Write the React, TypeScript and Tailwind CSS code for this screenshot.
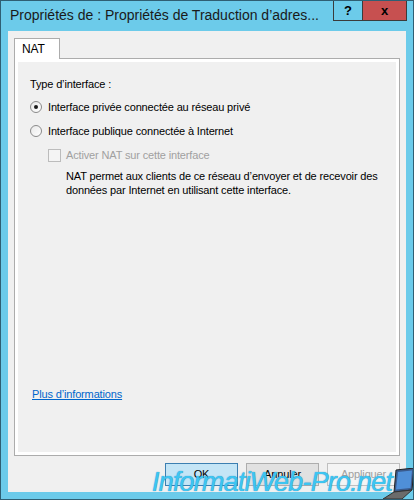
export default function App() {
  return (
    <div className="relative w-[414px] h-[500px] overflow-hidden bg-[#6ccbea] border border-[#2f5f73] flex flex-col font-['Liberation_Sans',Arial,sans-serif] text-[11px] tracking-[-0.15px] text-black">
      {/* Title bar */}
      <div className="flex h-[30px] shrink-0">
        <div className="flex-1 pl-[9px] pt-[4px] text-[14px] tracking-normal leading-[20px] text-[#1a1a1a] whitespace-nowrap overflow-hidden">
          Propriétés de : Propriétés de Traduction d’adres...
        </div>
        <div className="flex h-[20px] mr-[6px] border-b border-[#3b3b3b]">
          <div className="w-[29px] border-l border-[#3b3b3b] flex items-center justify-center font-bold text-[13px]">?</div>
          <div className="w-[45px] bg-[#c75050] border-l border-r border-[#3b3b3b] flex items-center justify-center font-bold text-[13px]">x</div>
        </div>
      </div>

      {/* Client area */}
      <div className="flex-1 mx-[7px] mb-[7px] bg-[#f0f0f0] flex flex-col px-[6px] pt-[7px]">
        {/* Tab strip */}
        <div className="flex h-[20px]">
          <div className="w-[46px] h-[21px] bg-white border border-b-0 border-[#acacac] pl-[7px] pt-[3px] leading-[14px] text-[12px] z-10">
            NAT
          </div>
        </div>

        {/* Tab panel */}
        <div className="h-[398px] border border-[#acacac] bg-white p-[3px] flex">
          <div className="flex-1 bg-[#f0f0f0] pl-[12px] pt-[15px] flex flex-col leading-[14px] whitespace-nowrap">
            <div>Type d’interface :</div>

            <div className="flex items-center mt-[9px]">
              <span className="w-[12px] h-[12px] rounded-full border border-[#8a8a8a] bg-gradient-to-br from-[#e8e8e8] to-white flex items-center justify-center mr-[6px]">
                <span className="w-[4px] h-[4px] rounded-full bg-[#1a1a1a]" />
              </span>
              <span>Interface privée connectée au réseau privé</span>
            </div>

            <div className="flex items-center mt-[10px]">
              <span className="w-[12px] h-[12px] rounded-full border border-[#8a8a8a] bg-gradient-to-br from-[#e8e8e8] to-white mr-[6px]" />
              <span>Interface publique connectée à Internet</span>
            </div>

            <div className="flex items-center mt-[10px] pl-[18px]">
              <span className="w-[13px] h-[13px] border border-[#bcbcbc] bg-[#f4f4f4] mr-[5px]" />
              <span className="text-[#a0a0a0]">Activer NAT sur cette interface</span>
            </div>

            <div className="pl-[36px] mt-[7px]">
              NAT permet aux clients de ce réseau d’envoyer et de recevoir des
              <br />
              données par Internet en utilisant cette interface.
            </div>

            <div className="pl-[2px] mt-[190px]">
              <span className="text-[#0066cc] underline">Plus d’informations</span>
            </div>
          </div>
        </div>

        {/* Buttons */}
        <div className="flex justify-end gap-[8px] mt-[7px]">
          <div className="w-[73px] h-[23px] bg-[#c4e5f6] border border-[#3c7fb1] flex items-center justify-center">OK</div>
          <div className="w-[73px] h-[23px] bg-[#e1e1e1] border border-[#adadad] flex items-center justify-center">Annuler</div>
          <div className="w-[73px] h-[23px] bg-[#f4f4f4] border border-[#bfbfbf] text-[#a0a0a0] flex items-center justify-center">Appliquer</div>
        </div>
      </div>

      {/* Watermark */}
      <div className="absolute left-[151px] top-[465px] flex items-end">
        <span className="italic text-[27px] leading-[32px] tracking-[-0.8px] text-[#3ec5f1] [text-shadow:0_0_1px_#1a7fb8]">
          InformatiWeb-Pro.net
        </span>
      </div>
      <svg className="absolute left-[381px] top-[467px]" width="33" height="33" viewBox="0 0 33 33">
        <polygon points="14,2 32,0 30,22 12,24" fill="#3a5a8c" stroke="#222" strokeWidth="1" />
        <polygon points="16,4 30,2.5 28.5,20 14,21.5" fill="#4f8fd8" />
        <polygon points="12,24 30,22 20,31 1,31" fill="#6b6b6b" stroke="#333" strokeWidth="1" />
      </svg>
    </div>
  )
}
